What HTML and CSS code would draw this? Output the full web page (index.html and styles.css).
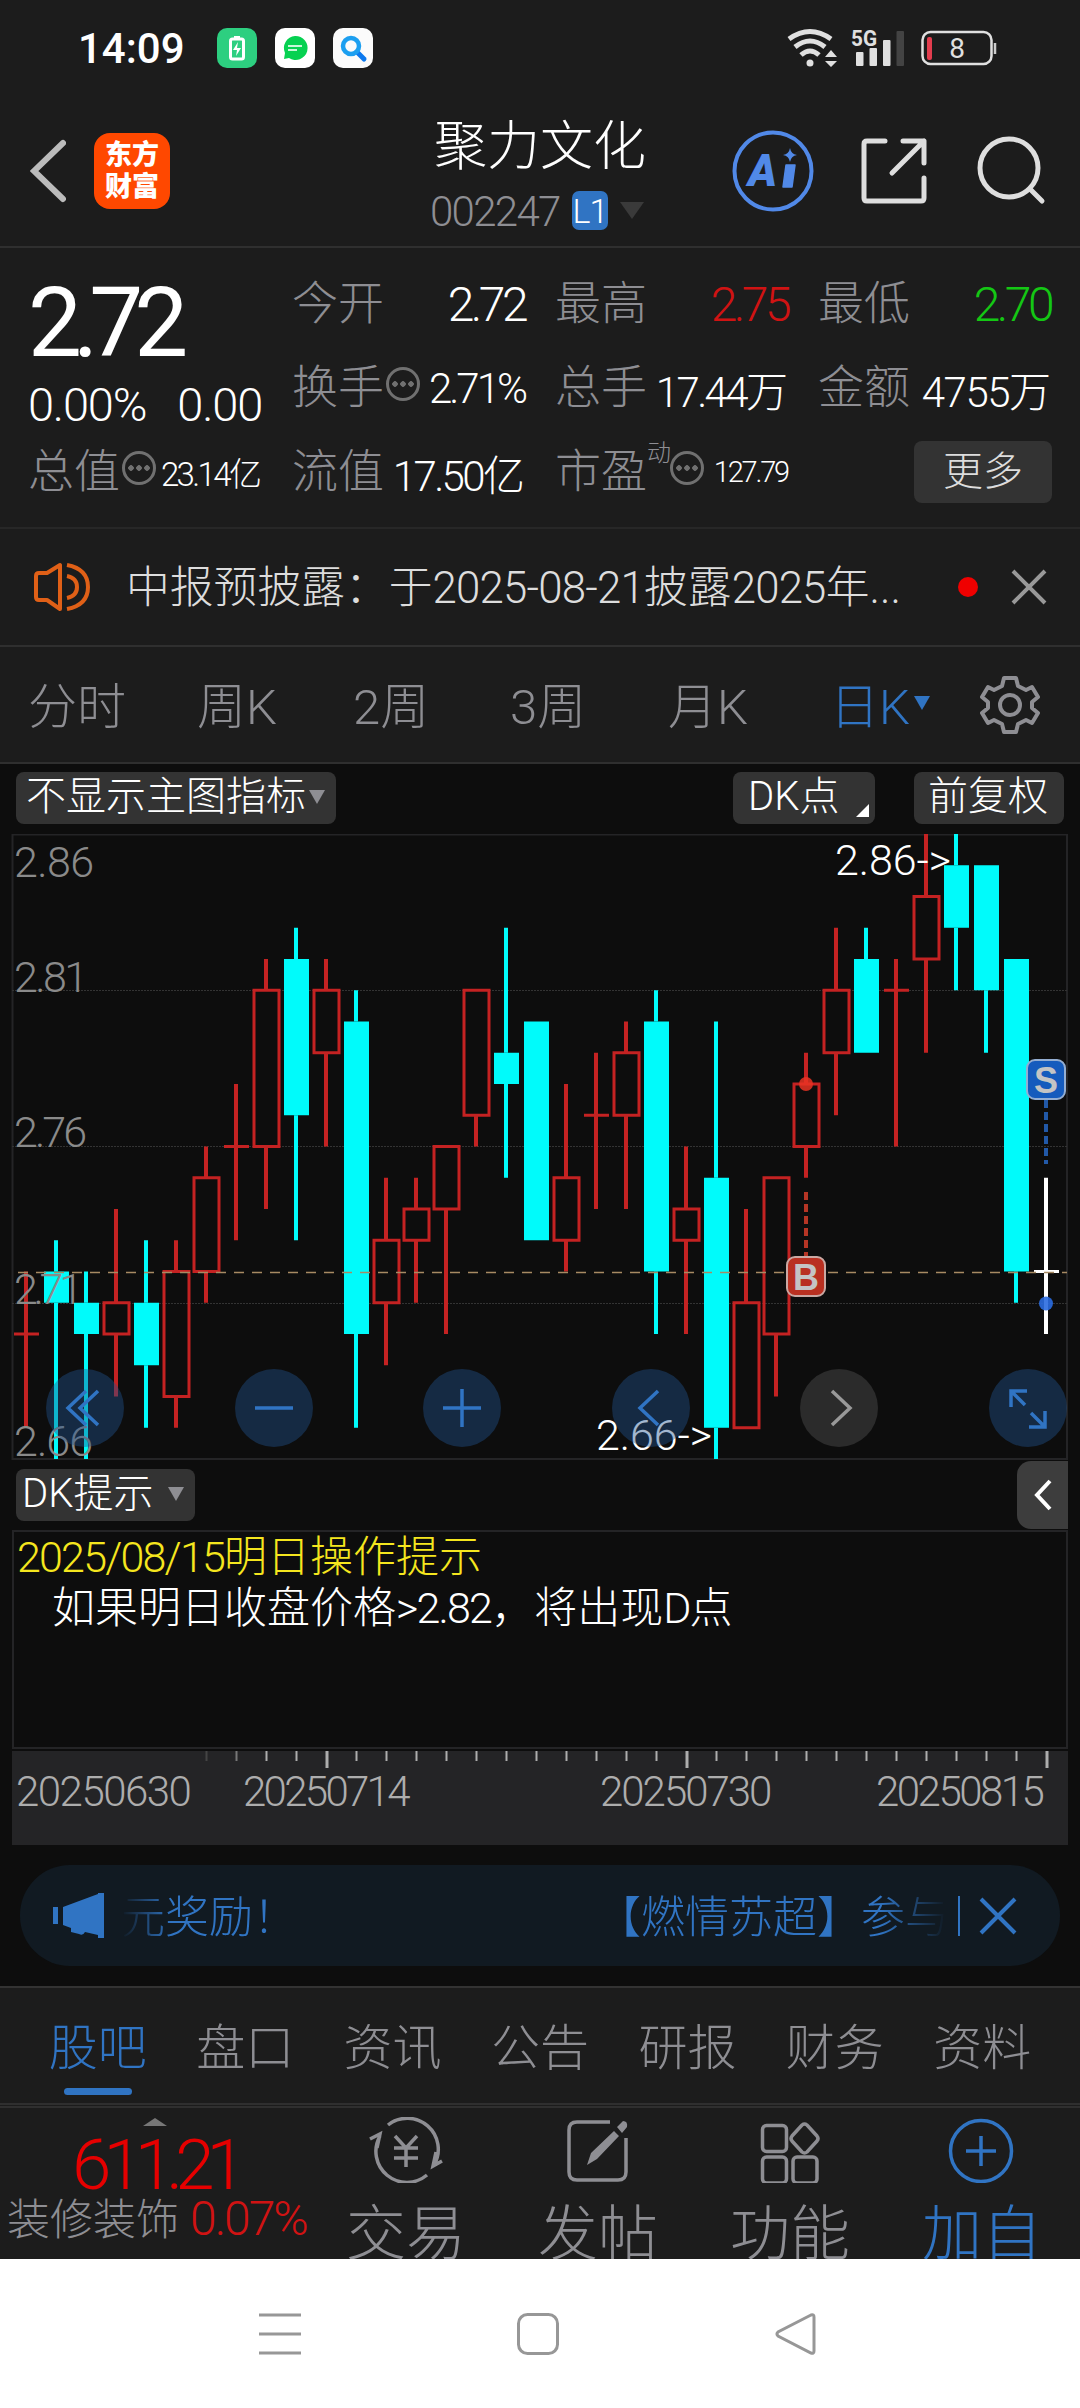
FILE: index.html
```html
<!DOCTYPE html>
<html lang="zh-CN">
<head>
    <meta charset="UTF-8">
    <meta name="viewport" content="width=device-width, initial-scale=1.0">
    <title>聚力文化 002247</title>
    <link rel="stylesheet" href="styles.css">
</head>
<body>
    <div class="screen">
        <!-- Status bar -->
        <div class="status-bar">
            <span class="clock">14:09</span>
            <div class="status-apps">
                <svg width="40" height="40" viewBox="0 0 40 40">
                    <rect width="40" height="40" rx="10" fill="#2dcf80"/>
                    <rect x="13.500" y="11" width="13" height="20" rx="2" fill="none" stroke="#fff" stroke-width="3"/>
                    <path d="M17 8h6v3h-6z" fill="#fff"/>
                    <path d="M21 14l-5 8h4l-1 6 5-8h-4z" fill="#fff"/>
                </svg>
                <svg width="40" height="40" viewBox="0 0 40 40">
                    <rect width="40" height="40" rx="10" fill="#fff"/>
                    <path d="M20 8a12 12 0 1 1-6 22l-5 1 1-6A12 12 0 0 1 20 8z" fill="#06d151"/>
                    <path d="M13 18h14M13 22h9" stroke="#c8f7d9" stroke-width="1.800"/>
                </svg>
                <svg width="40" height="40" viewBox="0 0 40 40">
                    <rect width="40" height="40" rx="10" fill="#fbfbfb"/>
                    <path d="M24 24l7 7" stroke="#0b78ee" stroke-width="5" stroke-linecap="round"/>
                    <circle cx="18" cy="18" r="8" fill="none" stroke="#1c9ff0" stroke-width="4.500"/>
                </svg>
            </div>
            <div class="status-right">
                <svg width="212" height="42" viewBox="786 26 212 42">
                    <g fill="none" stroke="#e0e0e0" stroke-width="5">
                        <path d="M790 38q21-15 42 0"/>
                        <path d="M796 46q15-12 30 0"/>
                        <path d="M802 54q9-8 18 0"/>
                    </g>
                    <circle cx="811" cy="62" r="3.500" fill="#e0e0e0"/>
                    <path d="M826 56l6-7 6 7zM826 60l6 6 6-6z" fill="#e0e0e0"/>
                    <text x="852" y="45" class="net-label" textLength="26" lengthAdjust="spacingAndGlyphs">5G</text>
                    <g fill="#e0e0e0">
                        <rect x="857" y="51" width="7.500" height="14" rx="1"/>
                        <rect x="870.500" y="47" width="7.500" height="18" rx="1"/>
                        <rect x="884" y="39" width="7.500" height="26" rx="1"/>
                        <rect x="897.500" y="30" width="7.500" height="35" rx="1" fill="#434343"/>
                    </g>
                    <rect x="923.500" y="31" width="69" height="32" rx="8" fill="none" stroke="#e0e0e0" stroke-width="2.500"/>
                    <path d="M996 42v11" stroke="#ccc" stroke-width="2.500"/>
                    <rect x="928" y="36" width="5" height="23" rx="2" fill="#e33d4e"/>
                    <text x="958" y="57" text-anchor="middle" class="battery-label">8</text>
                </svg>
            </div>
        </div>

        <!-- Title bar -->
        <header class="title-bar">
            <svg class="back" width="36" height="64" viewBox="0 0 36 64"><path d="M33 4L4 32l29 28" fill="none" stroke="#bbb" stroke-width="6" stroke-linecap="round"/></svg>
            <div class="logo"><span>东方</span><span>财富</span></div>
            <div class="stock">
                <h1>聚力文化</h1>
                <div class="stock-code"><span class="code">002247</span><span class="level">L1</span><i class="tri tri-dim"></i></div>
            </div>
            <svg class="title-icons" width="326" height="84" viewBox="730 130 326 84">
                <circle cx="775" cy="172" r="38.500" fill="none" stroke="#5189e8" stroke-width="4"/>
                <text x="750" y="187" class="ai-label">A</text>
                <path d="M788 166h9l-3 22h-9z" fill="#5189e8" stroke="#5189e8" stroke-width="1.500" stroke-linejoin="round"/>
                <path d="M792 149q1 6 7 7-6 1-7 7-1-6-7-7 6-1 7-7z" fill="#5189e8"/>
                <g fill="none" stroke="#dedede" stroke-width="5" stroke-linecap="round" stroke-linejoin="round">
                    <path d="M887 142h-18q-3 0-3 3v54q0 3 3 3h54q3 0 3-3v-20M905 142h21v22M926 142l-32 32"/>
                    <circle cx="1011" cy="169" r="29"/>
                    <path d="M1032 190l12 12"/>
                </g>
            </svg>
        </header>

        <!-- Quote summary -->
        <section class="quote">
            <div class="quote-main">
                <div class="price">2.72</div>
                <div class="change"><span>0.00%</span><span>0.00</span></div>
            </div>
            <div class="cell"><label>今开</label><b class="big">2.72</b></div>
            <div class="cell"><label>最高</label><b class="big red">2.75</b></div>
            <div class="cell"><label>最低</label><b class="big green">2.70</b></div>
            <div class="cell"><label>换手</label><i class="more-dot"></i><b class="pct">2.71%</b></div>
            <div class="cell"><label>总手</label><b class="tight">17.44<em>万</em></b></div>
            <div class="cell"><label>金额</label><b>4755<em>万</em></b></div>
            <div class="cell"><label>总值</label><i class="more-dot"></i><b class="small">23.14<em>亿</em></b></div>
            <div class="cell"><label>流值</label><b class="tight">17.50<em>亿</em></b></div>
            <div class="cell"><label>市盈</label><sup>动</sup><i class="more-dot"></i><b class="tiny">127.79</b></div>
            <div class="cell cell-end"><button class="more-btn">更多</button></div>
        </section>

        <!-- Notice -->
        <section class="notice">
            <svg width="58" height="52" viewBox="0 0 58 52" fill="none" stroke="#e06017" stroke-width="4">
                <path d="M3 15q0-3 3-3h8L27 4v44L14 39H6q-3 0-3-3z" stroke-linejoin="round"/>
                <path d="M34 4q21 4 21 22T34 48M34 15q10 2 10 11t-10 11"/>
            </svg>
            <p>中报预披露：于<span class="num">2025-08-21</span>披露<span class="num">2025</span>年...</p>
            <i class="red-dot"></i>
            <svg width="36" height="36" viewBox="0 0 36 36"><path d="M2 2l32 32M34 2L2 34" stroke="#999" stroke-width="4"/></svg>
        </section>

        <!-- Period tabs -->
        <nav class="periods">
            <a>分时</a>
            <a>周K</a>
            <a>2周</a>
            <a>3周</a>
            <a>月K</a>
            <a class="active">日K<i class="tri"></i></a>
            <svg width="60" height="60" viewBox="-30 -30 60 60" fill="none" stroke="#8e8e93" stroke-width="4">
                <path stroke-linejoin="round" d="M-6-27H6L8-19 16-15 22-18 28-8 22-3V3L28 8 22 18 16 15 8 19 6 27H-6L-8 19-16 15-22 18-28 8-22 3V-3L-28-8-22-18-16-15-8-19z"/>
                <circle r="10"/>
            </svg>
        </nav>

        <!-- K line chart -->
        <section class="chart-area">
            <div class="chart-tools">
                <button class="pill pill-main">不显示主图指标<i class="tri"></i></button>
                <button class="pill pill-dk">DK点<i class="corner"></i></button>
                <button class="pill pill-fq">前复权</button>
            </div>

            <div class="chart">
                <svg id="kline" width="1080" height="626" viewBox="0 834 1080 626">
                    <g fill="none" stroke="#242426" stroke-width="2">
                        <path d="M12 834.500H1067V1459H12.500V834"/>
                        <path d="M12 990.500H1067M12 1146.500H1067M12 1303.500H1067" stroke="#333" stroke-width="1" stroke-dasharray="2 1"/>
                    </g>
                    <g id="candles"></g>
                    <path d="M12 1272.500H1067" stroke="#a78a63" stroke-width="1.500" stroke-dasharray="10 8" stroke-dashoffset="-6"/>
                    <g class="axis-labels">
                        <text x="14" y="877" textLength="80">2.86</text>
                        <text x="14" y="992" textLength="74">2.81</text>
                        <text x="14" y="1147" textLength="73">2.76</text>
                        <text x="14" y="1304" textLength="69">2.71</text>
                        <text x="14" y="1456" textLength="79">2.66</text>
                    </g>
                    <g class="peak-labels">
                        <text x="835" y="875" textLength="116">2.86-&gt;</text>
                        <text x="596" y="1450" textLength="116">2.66-&gt;</text>
                    </g>
                    <!-- buy / sell marks -->
                    <path d="M806 1192v64" stroke="#b53525" stroke-width="4" stroke-dasharray="8 4"/>
                    <circle cx="806" cy="1084" r="7" fill="#ea3323" fill-opacity=".85"/>
                    <rect x="787" y="1257" width="38" height="39" rx="8" fill="#b93021" stroke="#c9a8a3" stroke-width="2"/>
                    <text x="806" y="1290" class="mark">B</text>
                    <path d="M1046 1100v64" stroke="#2259a8" stroke-width="4" stroke-dasharray="8 4"/>
                    <rect x="1027" y="1060" width="38" height="39" rx="8" fill="#155bbd" stroke="#94aed2" stroke-width="2"/>
                    <text x="1046" y="1093" class="mark">S</text>
                    <circle cx="1046" cy="1303.500" r="7" fill="#2a6be0" fill-opacity=".9"/>
                </svg>
                <div class="chart-buttons">
                    <button><svg viewBox="0 0 78 78"><path d="M40 22L22 39l18 17M52 22L34 39l18 17"/></svg></button>
                    <button><svg viewBox="0 0 78 78"><path d="M20 39h38"/></svg></button>
                    <button><svg viewBox="0 0 78 78"><path d="M20 39h38M39 20v38"/></svg></button>
                    <button><svg viewBox="0 0 78 78"><path d="M46 22L28 39l18 17"/></svg></button>
                    <button class="off"><svg viewBox="0 0 78 78"><path d="M32 22l18 17-18 17"/></svg></button>
                    <button><svg viewBox="0 0 78 78"><path d="M22 38V22h16M22 22l14 14M56 42v16H40M56 58L42 44"/></svg></button>
                </div>
            </div>

            <div class="sub-tools">
                <button class="pill pill-tip">DK提示<i class="tri"></i></button>
                <button class="drawer"><svg width="18" height="32" viewBox="0 0 18 32"><path d="M16 2L3 16l13 14" fill="none" stroke="#fff" stroke-width="4"/></svg></button>
            </div>

            <div class="tips">
                <p class="tip-title"><span class="date">2025/08/15</span>明日操作提示</p>
                <p class="tip-text">如果明日收盘价格<span class="date">&gt;2.82</span>，将出现<span class="date">D</span>点</p>
            </div>

            <div class="dates">
                <svg id="ticks" width="1056" height="18" viewBox="12 0 1056 18"></svg>
                <div class="date-labels">
                    <span>20250630</span>
                    <span>20250714</span>
                    <span>20250730</span>
                    <span>20250815</span>
                </div>
            </div>

            <div class="promo">
                <svg width="54" height="46" viewBox="0 0 54 46" fill="#3074c3"><path d="M1 14h5v17H1zM11 14L46 1V0h6v45h-6v-3l-13-3q-2 4-6 2l-4-1-4-1v-4l-8-3z"/></svg>
                <div class="marquee"><span>元奖励！</span><span>【燃情苏超】参与</span></div>
                <i class="bar"></i>
                <svg width="38" height="38" viewBox="0 0 38 38"><path d="M2 2l34 34M36 2L2 36" stroke="#3074c3" stroke-width="4"/></svg>
            </div>
        </section>

        <!-- Content tabs -->
        <nav class="content-tabs">
            <a class="active">股吧</a>
            <a>盘口</a>
            <a>资讯</a>
            <a>公告</a>
            <a>研报</a>
            <a>财务</a>
            <a>资料</a>
        </nav>

        <!-- Bottom bar -->
        <footer class="bottom-bar">
            <div class="index">
                <i class="tri-up"></i>
                <div class="index-value">611.21</div>
                <div class="index-name">装修装饰<span>0.07%</span></div>
            </div>
            <div class="action">
                <svg width="76" height="66" viewBox="368 2117 76 66" fill="none" stroke="#8e8e93" stroke-width="3.500">
                    <path d="M388 2125a31 31 0 0 1 46 40M442 2161l-9 5 3-14M427 2175a31 31 0 0 1-47-39M370 2139l10-5-3 14"/>
                    <path d="M395 2136l11 12 11-12M394 2148h24M394 2158h24M406 2148v19"/>
                </svg>
                <span>交易</span>
            </div>
            <div class="action">
                <svg width="76" height="66" viewBox="561 2117 76 66">
                    <path d="M611 2122h-33q-8 0-8 8v42q0 8 8 8h41q8 0 8-8v-34" fill="none" stroke="#8e8e93" stroke-width="3.500"/>
                    <path d="M588 2165l4-12 23-22 5 5-22 23zM618 2127l6-6q5 0 4 6l-5 6z" fill="#8e8e93"/>
                </svg>
                <span>发帖</span>
            </div>
            <div class="action">
                <svg width="76" height="66" viewBox="753 2117 76 66" fill="none" stroke="#8e8e93" stroke-width="3.500">
                    <rect x="763.500" y="2125.500" width="24" height="26" rx="4"/>
                    <rect x="763.500" y="2157" width="24" height="26" rx="4"/>
                    <rect x="794" y="2157" width="24" height="26" rx="4"/>
                    <path d="M803 2125q2.500-2 5 0l10 11q2 2.500 0 5l-10 11q-2.500 2-5 0l-10-11q-2-2.500 0-5z"/>
                </svg>
                <span>功能</span>
            </div>
            <div class="action action-add">
                <svg width="76" height="66" viewBox="946 2117 76 66" fill="none" stroke="#3074c3" stroke-width="3.500">
                    <circle cx="983" cy="2151" r="30.500"/>
                    <path d="M968 2151h30M983 2136v30"/>
                </svg>
                <span>加自</span>
            </div>
        </footer>
    </div>

    <!-- System navigation -->
    <div class="system-nav">
        <svg width="42" height="42" viewBox="0 0 42 42"><path d="M0 2h42M0 21h42M0 40h42"/></svg>
        <svg width="42" height="42" viewBox="0 0 42 42"><rect x="1.500" y="1.500" width="39" height="39" rx="9"/></svg>
        <svg width="42" height="42" viewBox="0 0 42 42"><path d="M36 2L3 19q-2 2 0 4l33 17q3 1 3-2V4q0-3-3-2z"/></svg>
    </div>

    <script src="script.js"></script>
</body>
</html>
```
FILE: styles.css
```css
* {
    margin: 0;
    padding: 0;
    box-sizing: border-box;
}

body {
    width: 1080px;
    height: 2408px;
    background-color: #fff;
    font-family: Roboto, "Noto Sans CJK SC", sans-serif;
    font-weight: 300;
    color: #fff;
    overflow: hidden;
}

button {
    border: none;
    background: none;
    font: inherit;
    color: inherit;
}

i, em {
    font-style: normal;
}

b {
    font-weight: 300;
}

svg {
    display: block;
    flex: none;
}

.screen {
    height: 2259px;
    background-color: #1c1c1c;
    overflow: hidden;
}

.tri {
    display: inline-block;
    border: 8px solid transparent;
    border-top: 14px solid #8e8e93;
    border-bottom: none;
}

.num {
    letter-spacing: -0.800px;
}

.date {
    letter-spacing: -1.800px;
}

/* status bar */
.status-bar {
    display: flex;
    align-items: center;
    height: 96px;
    padding-left: 78px;
}

.clock {
    width: 139px;
    font-size: 42px;
    font-weight: 500;
    letter-spacing: 0;
}

.status-apps {
    display: flex;
    gap: 18px;
}

.status-right {
    margin-left: 412px;
}

.net-label {
    font-size: 22px;
    font-weight: 700;
    fill: #e0e0e0;
}

.battery-label {
    font-size: 28px;
    font-weight: 400;
    fill: #e0e0e0;
}

/* title bar */
.title-bar {
    display: flex;
    align-items: center;
    height: 152px;
    padding-left: 30px;
    border-bottom: 2px solid #2f2f2f;
}

.logo {
    display: flex;
    flex-direction: column;
    align-items: center;
    justify-content: center;
    width: 76px;
    height: 76px;
    margin-left: 28px;
    border-radius: 16px;
    background-color: #ff4800;
    font-size: 27px;
    font-weight: 900;
    line-height: 32px;
}

.stock {
    width: 214px;
    height: 140px;
    margin-left: 264px;
}

.stock h1 {
    font-size: 53px;
    font-weight: 300;
    line-height: 80px;
    padding-top: 6px;
    white-space: nowrap;
}

.stock-code {
    display: flex;
    align-items: center;
    height: 50px;
    margin-top: -2px;
    margin-left: -4px;
    font-size: 42px;
    color: #8e8e93;
}

.code {
    width: 142px;
    padding-top: 2px;
    letter-spacing: -1.700px;
}

.level {
    width: 36px;
    height: 39px;
    border-radius: 7px;
    background-color: #3074c3;
    color: #fff;
    font-size: 34px;
    line-height: 40px;
    text-align: center;
    letter-spacing: -1px;
}

.tri-dim {
    margin-left: 12px;
    border-width: 17px 12px 0;
    border-top-color: #3a3a3a;
}

.title-icons {
    margin-left: 80px;
}

.ai-label {
    font-size: 44px;
    font-weight: 900;
    font-style: italic;
    fill: #5189e8;
}

/* quote */
.quote {
    display: grid;
    grid-template-columns: 234px 233px 233px 233px;
    grid-template-rows: repeat(3, 84px);
    column-gap: 30px;
    height: 281px;
    padding: 14px 28px;
    border-bottom: 2px solid #272727;
}

.quote-main {
    grid-row: span 2;
}

.price {
    height: 117px;
    font-size: 96px;
    font-weight: 400;
    line-height: 122px;
    letter-spacing: -9px;
}

.change {
    display: flex;
    justify-content: space-between;
    font-size: 47px;
    line-height: 52px;
    letter-spacing: -1.200px;
}

.cell {
    display: flex;
    align-items: center;
    white-space: nowrap;
}

.cell label {
    font-size: 46px;
    line-height: 68px;
    margin-top: -3px;
    color: #8e8e93;
}

.cell b {
    margin-left: auto;
    font-size: 42px;
    letter-spacing: -1.500px;
}

.cell b em {
    letter-spacing: 0;
}

.cell .big {
    font-size: 48px;
    letter-spacing: -3.500px;
}

.cell .pct {
    letter-spacing: -3px;
}

.cell .tight {
    letter-spacing: -2.600px;
}

.cell .small {
    font-size: 33px;
    letter-spacing: -2.600px;
}

.cell .tiny {
    font-size: 29px;
    letter-spacing: -2.200px;
}

.cell sup {
    align-self: flex-start;
    margin-top: 3px;
    font-size: 24px;
    color: #8e8e93;
}

.red {
    color: #d01313;
}

.green {
    color: #14c714;
}

.more-dot {
    width: 34px;
    height: 34px;
    margin-top: -8px;
    margin-left: 2px;
    border: 3px solid #707070;
    border-radius: 50%;
    background: radial-gradient(circle, #707070 2.500px, transparent 3px) center / 8px 28px;
    background-clip: content-box;
    padding: 0 2px;
}

sup + .more-dot {
    margin-left: -1px;
}

.cell-end {
    justify-content: flex-end;
}

.more-btn {
    width: 138px;
    height: 62px;
    margin-right: -1px;
    border-radius: 8px;
    background-color: #333;
    font-size: 40px;
    line-height: 58px;
    color: #ddd;
}

/* notice */
.notice {
    display: flex;
    align-items: center;
    height: 118px;
    padding: 0 33px;
    border-bottom: 2px solid #2f2f2f;
}

.notice p {
    width: 831px;
    padding: 0 0 6px 35px;
    font-size: 43.800px;
    color: #ddd;
    white-space: nowrap;
}

.red-dot {
    width: 20px;
    height: 20px;
    margin: 0 33px 0 37px;
    border-radius: 50%;
    background-color: #f00000;
}

/* period tabs */
.periods {
    display: grid;
    grid-template-columns: 169px 156px 157px 158px 162px 150px 60px;
    align-items: center;
    height: 117px;
    padding-left: 28px;
    border-bottom: 2px solid #2f2f2f;
    font-size: 49px;
    color: #8e8e93;
}

.periods a {
    padding-bottom: 4px;
}

.periods .active {
    display: flex;
    align-items: center;
    color: #3074c3;
}

.periods .tri {
    margin-left: 4px;
    border-top-color: #3074c3;
}

/* chart */
.chart-area {
    height: 1222px;
    background-color: #0d0d0d;
}

.chart-tools {
    display: flex;
    height: 70px;
    padding: 8px 16px;
}

.pill {
    display: flex;
    align-items: center;
    height: 52px;
    padding-bottom: 2px;
    border-radius: 8px;
    background-color: #333;
    font-size: 40px;
    line-height: 50px;
    white-space: nowrap;
}

.pill-main {
    width: 320px;
    padding-left: 10px;
}

.pill-main .tri {
    margin-left: 3px;
}

.pill-dk {
    width: 142px;
    margin-left: 397px;
    padding-left: 15px;
}

.corner {
    align-self: flex-end;
    margin: 0 0 5px 17px;
    border-bottom: 13px solid #fff;
    border-left: 13px solid transparent;
}

.pill-fq {
    width: 150px;
    margin-left: 39px;
    padding-left: 14px;
}

.chart {
    position: relative;
    height: 626px;
}

.axis-labels {
    font-size: 43px;
    fill: #8a8a8a;
}

.peak-labels {
    font-size: 43px;
    fill: #fff;
}

.mark {
    font-family: "Liberation Sans", sans-serif;
    font-size: 36px;
    font-weight: 700;
    fill: #c4c4c4;
    text-anchor: middle;
}

/* zoom and pan buttons float over the candles */
.chart-buttons {
    position: absolute;
    left: 46px;
    right: 13px;
    bottom: 13px;
    display: flex;
    justify-content: space-between;
}

.chart-buttons button {
    width: 78px;
    height: 78px;
    border-radius: 50%;
    background-color: rgba(34, 84, 144, 0.42);
}

.chart-buttons .off {
    background-color: #2b2b2b;
}

.chart-buttons path {
    fill: none;
    stroke: #3074c3;
    stroke-width: 3.500;
}

.chart-buttons .off path {
    stroke: #999;
}

.sub-tools {
    display: flex;
    align-items: center;
    justify-content: space-between;
    height: 70px;
    padding: 0 12px 0 16px;
}

.pill-tip {
    width: 179px;
    padding-left: 6px;
}

.pill-tip .tri {
    margin-left: 15px;
}

.drawer {
    display: flex;
    align-items: center;
    justify-content: center;
    width: 51px;
    height: 68px;
    border-radius: 14px 0 0 14px;
    background-color: #3d3d3d;
}

.tips {
    height: 219px;
    margin: 0 12px;
    border: 2px solid #242426;
    font-size: 43px;
    line-height: 51px;
}

.tip-title {
    padding-left: 3px;
    color: #f5e61e;
}

.tip-text {
    padding-left: 38px;
}

.dates {
    height: 94px;
    margin: 2px 12px 0;
    background-color: #242426;
}

.date-labels {
    display: flex;
    padding-left: 4px;
    font-size: 42px;
    line-height: 46px;
    letter-spacing: -2px;
    color: #adadad;
}

.date-labels span:nth-child(1) {
    width: 227px;
    letter-spacing: -1.500px;
}

.date-labels span:nth-child(2) {
    width: 357px;
    letter-spacing: -2.700px;
}

.date-labels span:nth-child(3) {
    width: 276px;
}

.date-labels span:nth-child(4) {
    letter-spacing: -2.500px;
}

.promo {
    display: flex;
    align-items: center;
    width: 1040px;
    height: 101px;
    margin: 20px auto 0;
    padding: 0 43px 0 32px;
    border-radius: 50px;
    background-color: #111a22;
    font-size: 44px;
    color: #3074c3;
}

.marquee {
    display: flex;
    justify-content: space-between;
    width: 830px;
    margin-left: 15px;
    padding-bottom: 4px;
    white-space: nowrap;
    -webkit-mask-image: linear-gradient(90deg, transparent, #000 50px, #000 760px, transparent 825px);
    mask-image: linear-gradient(90deg, transparent, #000 50px, #000 760px, transparent 825px);
}

.bar {
    width: 2px;
    height: 40px;
    margin: 0 19px 0 9px;
    background-color: #3074c3;
}

/* content tabs */
.content-tabs {
    display: flex;
    height: 119px;
    padding: 0 24px;
    border-top: 2px solid #333;
    border-bottom: 2px solid #2f2f2f;
    font-size: 49px;
    color: #8e8e93;
}

.content-tabs a {
    display: flex;
    flex: 1;
    flex-direction: column;
    align-items: center;
    line-height: 121px;
}

.content-tabs .active {
    color: #3074c3;
}

.content-tabs .active::after {
    content: "";
    width: 68px;
    height: 7px;
    margin-top: -21px;
    border-radius: 4px;
    background-color: #3074c3;
}

/* bottom bar */
.bottom-bar {
    display: flex;
    height: 154px;
    margin-top: 1px;
    border-top: 2px solid #2f2f2f;
    overflow: hidden;
}

.index {
    display: flex;
    flex-direction: column;
    align-items: center;
    width: 310px;
    padding-top: 10px;
}

.tri-up {
    border: 12px solid transparent;
    border-top: none;
    border-bottom: 8px solid #777;
}

.index-value {
    margin-top: 9px;
    font-size: 71px;
    line-height: 60px;
    letter-spacing: -8px;
    color: #e60000;
}

.index-name {
    align-self: flex-start;
    padding-left: 7px;
    font-size: 43px;
    line-height: 48px;
    color: #8e8e93;
    white-space: nowrap;
}

.index-name span {
    margin-left: 11px;
    font-size: 48px;
    letter-spacing: -2px;
    color: #d01313;
}

.action {
    display: flex;
    flex-direction: column;
    align-items: center;
    width: 192px;
    padding-top: 9px;
    font-size: 60px;
    line-height: 88px;
    color: #8e8e93;
    white-space: nowrap;
}

.action span {
    margin-top: 8px;
}

.action-add {
    color: #3074c3;
}

/* system navigation */
.system-nav {
    display: flex;
    gap: 216px;
    height: 149px;
    padding: 54px 0 0 259px;
}

.system-nav path,
.system-nav rect {
    fill: none;
    stroke: #979797;
    stroke-width: 3;
}
```
FILE: script.js
```javascript
// [open, close, high, low] in cents
const days = [
    [270, 270, 272, 267], [272, 271, 273, 266], [271, 270, 272, 266], [270, 271, 274, 268],
    [271, 269, 273, 267], [268, 272, 273, 267], [272, 275, 276, 271], [276, 276, 278, 273],
    [276, 281, 282, 274], [282, 277, 283, 273], [279, 281, 282, 276], [280, 270, 281, 267],
    [271, 273, 275, 269], [273, 274, 275, 271], [274, 276, 276, 270], [277, 281, 281, 276],
    [279, 278, 283, 275], [280, 273, 280, 273], [273, 275, 278, 272], [277, 277, 279, 274],
    [277, 279, 280, 274], [280, 272, 281, 270], [273, 274, 276, 270], [275, 267, 280, 266],
    [267, 271, 274, 267], [270, 275, 275, 268], [276, 278, 279, 275], [279, 281, 283, 277],
    [282, 279, 283, 279], [281, 281, 282, 276], [282, 284, 286, 279], [285, 283, 286, 281],
    [285, 281, 285, 279], [282, 272, 282, 271], [272, 272, 275, 270]
];

const step = 30;
const y = price => 834 + (286 - price) * 31.25;
let marks = '';

days.forEach(([open, close, high, low], i) => {
    const x = 26 + i * step;
    const top = y(Math.max(open, close));
    const bottom = y(Math.min(open, close));
    let color = close < open ? '#00fbfb' : '#c42222';
    if (i === days.length - 1) color = '#fff';

    marks += `<path d="M${x} ${y(high)}V${top}M${x} ${bottom}V${y(low)}" stroke="${color}" stroke-width="4"/>`;
    if (open === close) {
        marks += `<path d="M${x - 12} ${top}h25" stroke="${color}" stroke-width="3"/>`;
    } else if (close < open) {
        marks += `<rect x="${x - 12}" y="${top}" width="25" height="${bottom - top}" fill="${color}"/>`;
    } else {
        marks += `<rect x="${x - 12}" y="${top}" width="25" height="${bottom - top}" fill="none" stroke="${color}" stroke-width="3"/>`;
    }
});
document.getElementById('candles').innerHTML = marks;

// Date axis ticks, a long one on each labelled day
let ticks = '';
for (let i = 6; i < days.length; i++) {
    const major = i === 10 || i === 22 || i === 34;
    const color = i === 6 ? '#444' : i === 7 ? '#777' : '#adadad';
    ticks += `<path d="M${26 + i * step + (major ? 1 : 0.5)} 0v${major ? 17 : 10}" stroke="${color}" stroke-width="${major ? 3 : 2}"/>`;
}
document.getElementById('ticks').innerHTML = ticks;
```
